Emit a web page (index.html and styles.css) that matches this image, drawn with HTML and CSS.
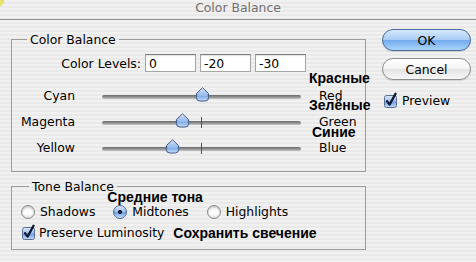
FILE: index.html
```html
<!DOCTYPE html>
<html lang="en">
<head>
  <meta charset="UTF-8">
  <meta name="viewport" content="width=device-width, initial-scale=1.0">
  <title>Color Balance</title>
  <link rel="stylesheet" href="styles.css">
</head>
<body>
  <div class="titlebar">
    <span class="traffic-light"></span>
    <span class="title">Color Balance</span>
  </div>

  <div class="dialog">
    <div class="panels">
      <fieldset class="group color-group">
        <legend>Color Balance</legend>
        <div class="levels-row">
          <span class="levels-label">Color Levels:</span>
          <input class="level" type="text" value="0">
          <input class="level" type="text" value="-20">
          <input class="level" type="text" value="-30">
        </div>

        <div class="sliders">
          <div class="slider-row">
            <span class="slider-left">Cyan</span>
            <div class="track">
              <svg class="thumb" style="left: 50%" width="15" height="15" viewBox="0 0 15 15"><use href="#thumb-shape"/></svg>
            </div>
            <span class="slider-right"><span class="note note-red">Красные</span>Red</span>
          </div>
          <div class="slider-row">
            <span class="slider-left">Magenta</span>
            <div class="track">
              <span class="tick"></span>
              <svg class="thumb" style="left: 40%" width="15" height="15" viewBox="0 0 15 15"><use href="#thumb-shape"/></svg>
            </div>
            <span class="slider-right"><span class="note">Зелёные</span>Green</span>
          </div>
          <div class="slider-row">
            <span class="slider-left">Yellow</span>
            <div class="track">
              <span class="tick"></span>
              <svg class="thumb" style="left: 35%" width="15" height="15" viewBox="0 0 15 15"><use href="#thumb-shape"/></svg>
            </div>
            <span class="slider-right"><span class="note note-blue">Синие</span>Blue</span>
          </div>
        </div>
      </fieldset>

      <fieldset class="group tone-group">
        <legend>Tone Balance</legend>
        <div class="tone-options">
          <label class="option"><span class="radio"></span>Shadows</label>
          <label class="option"><span class="note note-mid">Средние тона</span><span class="radio checked"></span>Midtones</label>
          <label class="option"><span class="radio"></span>Highlights</label>
        </div>
        <div class="luminosity-row">
          <label class="option">
            <svg class="checkbox" width="16" height="16" viewBox="0 0 16 16"><use href="#check-shape"/></svg>
            Preserve Luminosity
          </label>
          <span class="inline-note">Сохранить свечение</span>
        </div>
      </fieldset>
    </div>

    <div class="actions">
      <button class="btn btn-default">OK</button>
      <button class="btn">Cancel</button>
      <label class="option preview">
        <svg class="checkbox" width="16" height="16" viewBox="0 0 16 16"><use href="#check-shape"/></svg>
        Preview
      </label>
    </div>
  </div>

  <svg class="defs" width="0" height="0">
    <defs>
      <linearGradient id="aqua-blue" x1="0" y1="0" x2="0" y2="1">
        <stop offset="0" stop-color="#dfeafb"/>
        <stop offset="0.45" stop-color="#9fc0ee"/>
        <stop offset="0.55" stop-color="#6f9fe2"/>
        <stop offset="1" stop-color="#c8e0fb"/>
      </linearGradient>
      <g id="thumb-shape">
        <path d="M7.5 0.8 L13.6 6.6 V10.6 A3.4 3.4 0 0 1 10.2 14 H4.8 A3.4 3.4 0 0 1 1.4 10.6 V6.6 Z" fill="url(#aqua-blue)" stroke="#43598a" stroke-width="1"/>
        <path d="M3 8 H12" stroke="#ffffff" stroke-opacity="0.5" stroke-width="1"/>
      </g>
      <g id="check-shape">
        <rect x="1.5" y="3.5" width="12" height="12" rx="2" fill="url(#aqua-blue)" stroke="#5b6f96" stroke-width="1"/>
        <path d="M4 9.2 L6.6 12.6 L12.6 1.6" fill="none" stroke="#0d1730" stroke-width="2.2" stroke-linecap="round" stroke-linejoin="round"/>
      </g>
    </defs>
  </svg>
</body>
</html>
```

FILE: styles.css
```css
* {
  margin: 0;
  padding: 0;
  box-sizing: border-box;
}

body {
  width: 476px;
  height: 262px;
  overflow: hidden;
  font-family: "DejaVu Sans", Verdana, sans-serif;
  font-size: 12.4px;
  color: #000;
  background: repeating-linear-gradient(to bottom, #f1f1f1 0, #f1f1f1 2px, #e9e9e9 2px, #e9e9e9 4px);
}

.titlebar {
  position: relative;
  height: 20px;
  border-bottom: 1px solid #8e8e8e;
  text-align: center;
  line-height: 16px;
  color: #6f6f6f;
  overflow: hidden;
}

.traffic-light {
  position: absolute;
  left: -9px;
  top: -6px;
  width: 13px;
  height: 13px;
  border-radius: 50%;
  background: radial-gradient(circle at 60% 70%, #f2ef7a, #c9c02a);
}

.dialog {
  display: flex;
  padding: 9px 0 0 11px;
}

.group {
  width: 355px;
  border: 1px solid #9c9c9c;
}

.group legend {
  margin-left: 15px;
  padding: 0 3px;
  line-height: 15px;
}

.color-group {
  margin-top: 3px;
  padding-bottom: 9px;
}

.levels-row {
  display: flex;
  align-items: center;
  height: 18px;
  margin-top: 7px;
}

.levels-label {
  width: 129px;
  margin-right: 4px;
  text-align: right;
}

.level {
  width: 51px;
  height: 18px;
  margin-right: 4px;
  padding: 0 3px;
  font: inherit;
  background: #fff;
  border: 1px solid #a5a5a5;
  border-top-color: #7d7d7d;
  box-shadow: inset 0 1px 1px rgba(0, 0, 0, 0.12);
}

.sliders {
  margin-top: 12px;
}

.slider-row {
  display: flex;
  align-items: center;
  height: 26px;
}

.slider-left {
  width: 63px;
  margin-right: 27px;
  text-align: right;
  margin-top: -3px;
}

.track {
  position: relative;
  width: 199px;
  height: 4px;
  border-radius: 2px;
  background: linear-gradient(#6a6a6a, #9a9a9a 60%, #c8c8c8);
}

.tick {
  position: absolute;
  left: 99px;
  top: -4px;
  width: 1px;
  height: 11px;
  background: #505050;
}

.thumb {
  position: absolute;
  top: -8px;
  margin-left: -7px;
}

.slider-right {
  position: relative;
  margin-left: 18px;
  margin-top: -3px;
  line-height: 12px;
}

.note {
  position: absolute;
  left: -10px;
  bottom: 17px;
  font-family: "Liberation Sans", Arial, sans-serif;
  font-size: 14px;
  line-height: 12px;
  font-weight: bold;
  white-space: nowrap;
}

.note-red {
  bottom: 18px;
}

.note-blue {
  left: -7px;
  bottom: 16px;
}

.tone-group {
  margin-top: 7px;
  padding: 0 0 8px 9px;
}

.tone-group legend {
  margin-left: 8px;
}

.tone-options {
  display: flex;
  align-items: center;
  height: 16px;
  margin-top: 10px;
}

.option {
  position: relative;
  display: flex;
  align-items: center;
  gap: 5px;
  margin-right: 18px;
  line-height: 16px;
}

.note-mid {
  left: -6px;
  bottom: 16px;
  line-height: 14px;
}

.radio {
  width: 14px;
  height: 14px;
  border-radius: 50%;
  border: 1px solid #8a8a8a;
  background: linear-gradient(#f2f2f2, #ffffff 60%, #e2e2e2);
  box-shadow: inset 0 1px 2px rgba(0, 0, 0, 0.25);
}

.radio.checked {
  border-color: #4c6494;
  background: radial-gradient(circle, #142036 0, #142036 1.8px, transparent 2.3px),
    linear-gradient(#dfeafb, #9fc0ee 45%, #6f9fe2 55%, #c8e0fb);
  box-shadow: none;
}

.luminosity-row {
  display: flex;
  align-items: center;
  height: 16px;
  margin-top: 5px;
}

.luminosity-row .option {
  gap: 2px;
  margin-right: 9px;
}

.inline-note {
  font-family: "Liberation Sans", Arial, sans-serif;
  font-size: 14px;
  font-weight: bold;
  white-space: nowrap;
}

.checkbox {
  flex: none;
  margin-top: -3px;
}

.actions {
  display: flex;
  flex-direction: column;
  margin-left: 16px;
}

.btn {
  width: 89px;
  height: 22px;
  border-radius: 11px;
  font: inherit;
  color: #000;
  border: 1px solid #8d8d8d;
  background: linear-gradient(#ffffff, #f4f4f4 48%, #e4e4e4 52%, #f7f7f7);
  box-shadow: 0 1px 1px rgba(0, 0, 0, 0.12);
}

.btn-default {
  border-color: #4a6a9e;
  background: linear-gradient(#d8e8fc, #a9ccf6 48%, #74abee 52%, #a9d4fc);
}

.btn + .btn {
  margin-top: 7px;
}

.preview {
  gap: 3px;
  margin: 13px 0 0 1px;
  height: 16px;
}

.defs {
  position: absolute;
}
```
